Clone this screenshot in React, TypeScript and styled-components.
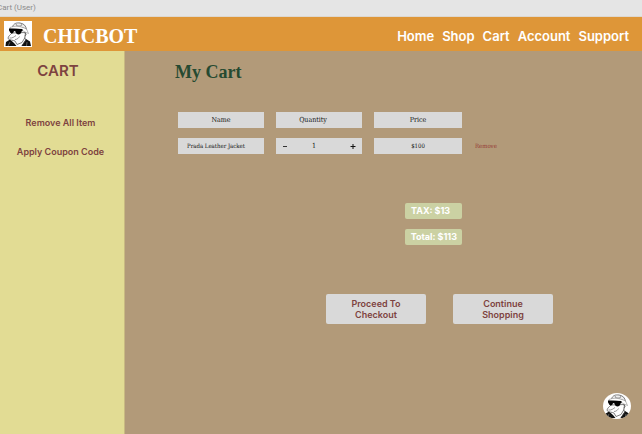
import React, { useState } from "react";
import styled, { createGlobalStyle } from "styled-components";

const sans = `Inter, "Liberation Sans", sans-serif`;
const serif = `"Liberation Serif", "Times New Roman", serif`;
const smallSerif = `"DejaVu Serif Condensed", "DejaVu Serif", serif`;

const GlobalStyle = createGlobalStyle`
  * { box-sizing: border-box; }
  body { margin: 0; background: #b29a79; font-family: ${sans}; }
  button { border: 0; padding: 0; background: none; font: inherit; color: inherit; cursor: pointer; }
`;

const Page = styled.div`
  min-height: 100vh;
  display: flex;
  flex-direction: column;
`;

const FrameLabel = styled.div`
  height: 17px;
  padding-top: 3px;
  background: #e5e5e5;
  color: #8c8c8c;
  font: 8px/10px Roboto, sans-serif;
  text-indent: -3px;
  white-space: nowrap;
  border-bottom: 1px solid #ddd8d0;
`;

const Header = styled.header`
  display: flex;
  align-items: center;
  justify-content: space-between;
  height: 34px;
  padding: 0 13px 0 4px;
  background: #de9638;
  color: #fff;
`;

const Brand = styled.a`
  display: flex;
  align-items: center;
  gap: 11px;
  color: inherit;
  text-decoration: none;
  font: bold 20px/24px ${serif};
`;

const BrandName = styled.span`
  padding-top: 3px;
`;

const Nav = styled.nav`
  display: flex;
  gap: 8px;
  padding-top: 3px;
`;

const NavLink = styled.a`
  color: inherit;
  text-decoration: none;
  font-size: 13px;
  line-height: 18px;
  font-weight: 600;
`;

const Body = styled.div`
  flex: 1;
  display: flex;
`;

const Sidebar = styled.aside`
  flex: 0 0 125px;
  display: flex;
  flex-direction: column;
  align-items: center;
  padding: 10px 3px 0 0;
  background: #e2dc94;
  border-right: 1px solid #c8b982;
  color: #7e4340;
`;

const SideTitle = styled.h2`
  margin: 0 5px 35px 0;
  font-size: 15px;
  line-height: 20px;
  font-weight: 600;
`;

const SideAction = styled.button`
  && {
    height: 13px;
    margin-bottom: 16px;
    font-size: 9px;
    line-height: 13px;
    font-weight: 600;
  }
`;

const Main = styled.main`
  flex: 1;
  padding: 10px 16px 0 50px;
`;

const Title = styled.h1`
  margin: 0 0 29px;
  color: #264a31;
  font: bold 18px/22px ${serif};
`;

const Content = styled.div`
  max-width: 378px;
  padding-left: 3px;
`;

const CartTable = styled.table`
  margin: -10px -12px;
  border-collapse: separate;
  border-spacing: 12px 10px;
  font: 7px/16px ${smallSerif};
  color: #111;
  text-align: center;
`;

const Cell = styled.td<{ $w: number; $small?: boolean }>`
  width: ${(p) => p.$w}px;
  min-width: ${(p) => p.$w}px;
  height: 16px;
  padding: 0;
  background: #d9d9d9;
  font-weight: 400;
  font-size: ${(p) => (p.$small ? 6 : 7)}px;
`;

const QuantityHeading = styled(Cell)`
  padding-right: 12px;
`;

const ProductCell = styled(Cell)`
  text-align: left;
  padding-left: 9px;
`;

const ActionCell = styled.td`
  padding: 0 0 0 1px;
  font-size: 6px;
  color: #963a34;
`;

const Stepper = styled.div`
  display: grid;
  grid-template-columns: 6px 1fr 6px;
  align-items: center;
  padding: 0 6px;
`;

const Count = styled.span`
  padding-right: 10px;
`;

const StepButton = styled.button`
  display: flex;
  align-items: center;
`;

const Totals = styled.dl`
  display: flex;
  flex-direction: column;
  align-items: flex-end;
  gap: 10px;
  margin: 49px 91px 49px 0;
`;

const Total = styled.div`
  display: flex;
  justify-content: flex-start;
  gap: 2px;
  min-width: 57px;
  height: 16px;
  padding: 0 5px 0 6px;
  border-radius: 2px;
  background: #cbd1a3;
  color: #fff;
  font-size: 9px;
  line-height: 16px;
  font-weight: 700;
  dd { margin: 0; }
`;

const Actions = styled.div`
  display: flex;
  justify-content: flex-end;
  gap: 27px;
`;

const ActionButton = styled.button`
  && {
    width: 100px;
    height: 30px;
    padding: 0 20px;
    border-radius: 2px;
    background: #d9d9d9;
    color: #7e4340;
    font-size: 9px;
    line-height: 11px;
    font-weight: 600;
  }
`;

const ChatButton = styled.button`
  position: fixed;
  right: 11px;
  bottom: 15px;
  width: 28px;
  height: 26px;
  border-radius: 50%;
  overflow: hidden;
`;

function Mascot() {
  return (
    <svg width="28" height="26" viewBox="0 0 56 52" aria-hidden="true" display="block">
      <rect width="56" height="52" fill="#fff" />
      <path d="M3 50 4 42 12 37 20 44 25 50ZM35 50 44 36 52 41 54 50Z" fill="#111" />
      <path d="M16 24C12 28 8 31 8 35 12 39 18 38 22 40L26 47 36 43 42 33 43 23Z" fill="#fff" stroke="#555" strokeWidth="1.5" />
      <path d="M17 12C19 5 25 3 32 4 40 5 44 10 45 17L36 13 17 13Z" fill="#eee" stroke="#555" strokeWidth="1.5" />
      <path d="M24 6 26 10 34 10 36 6" fill="none" stroke="#777" strokeWidth="1.5" />
      <path d="M12 13C22 9 33 10 45 16L49 25 42 22C33 16 22 14 12 16Z" fill="#fff" stroke="#777" />
      <path d="M10 15 37 16 37 20 35 21C34 29 24 29 23 21L20 20C19 27 12 26 11 20L10 19Z" fill="#050505" />
      <path d="M11 34C17 35 21 31 24 29M22 37C27 37 29 34 31 31" fill="none" stroke="#777" strokeWidth="1.5" />
      <path d="M41 24C45 24 45 29 41 30M41 33 44 38 36 49" fill="none" stroke="#444" strokeWidth="1.5" />
      <path d="M8 50 12 42M45 50 46 42" fill="none" stroke="#aaa" />
    </svg>
  );
}

export default function App() {
  const [quantity, setQuantity] = useState(1);
  return (
    <Page>
      <GlobalStyle />
      <FrameLabel>Cart (User)</FrameLabel>
      <Header>
        <Brand href="#home"><Mascot /><BrandName>CHICBOT</BrandName></Brand>
        <Nav>
          {["Home", "Shop", "Cart", "Account", "Support"].map((name) => (
            <NavLink key={name} href={`#${name.toLowerCase()}`}>{name}</NavLink>
          ))}
        </Nav>
      </Header>
      <Body>
        <Sidebar>
          <SideTitle>CART</SideTitle>
          <SideAction>Remove All Item</SideAction>
          <SideAction>Apply Coupon Code</SideAction>
        </Sidebar>
        <Main>
          <Title>My Cart</Title>
          <Content>
            <CartTable>
              <thead>
                <tr>
                  <Cell as="th" scope="col" $w={86}>Name</Cell>
                  <QuantityHeading as="th" scope="col" $w={86}>Quantity</QuantityHeading>
                  <Cell as="th" scope="col" $w={88}>Price</Cell>
                </tr>
              </thead>
              <tbody>
                <tr>
                  <ProductCell $w={86} $small>Prada Leather Jacket</ProductCell>
                  <Cell $w={86}>
                    <Stepper>
                      <StepButton aria-label="Decrease quantity" onClick={() => setQuantity(Math.max(1, quantity - 1))}>
                        <svg width="6" height="6" viewBox="0 0 6 6"><path d="M1 3.5H5" stroke="#333" /></svg>
                      </StepButton>
                      <Count>{quantity}</Count>
                      <StepButton aria-label="Increase quantity" onClick={() => setQuantity(quantity + 1)}>
                        <svg width="6" height="6" viewBox="0 0 6 6"><path d="M.5 3.5H5.5M3 1V6" stroke="#111" /></svg>
                      </StepButton>
                    </Stepper>
                  </Cell>
                  <Cell $w={88} $small>$100</Cell>
                  <ActionCell><button>Remove</button></ActionCell>
                </tr>
              </tbody>
            </CartTable>
            <Totals>
              <Total><dt>TAX:</dt><dd>$13</dd></Total>
              <Total><dt>Total:</dt><dd>$113</dd></Total>
            </Totals>
            <Actions>
              <ActionButton>Proceed To Checkout</ActionButton>
              <ActionButton>Continue Shopping</ActionButton>
            </Actions>
          </Content>
        </Main>
      </Body>
      <ChatButton aria-label="Open chat"><Mascot /></ChatButton>
    </Page>
  );
}
